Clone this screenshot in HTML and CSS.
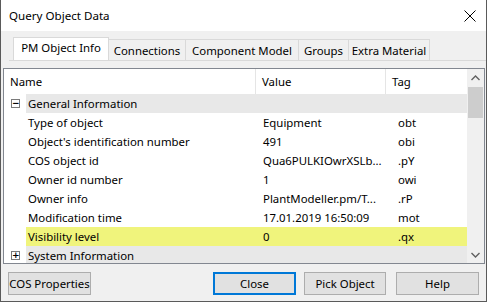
FILE: index.html
```html
<!DOCTYPE html>
<html lang="en">
<head>
<meta charset="UTF-8">
<title>Query Object Data</title>
<link rel="stylesheet" href="styles.css">
</head>
<body>

<div class="dialog">
    <div class="titlebar">
        <span class="title">Query Object Data</span>
        <svg class="close-x" width="12" height="12" viewBox="0 0 12 12">
            <path d="M0.5 0.5 L11.5 11.5 M11.5 0.5 L0.5 11.5" stroke="#000" stroke-width="1" fill="none"/>
        </svg>
    </div>

    <div class="content">
        <div class="tabs">
            <div class="tab active tab-pm">PM Object Info</div>
            <div class="tab tab-conn">Connections</div>
            <div class="tab tab-comp">Component Model</div>
            <div class="tab tab-groups">Groups</div>
            <div class="tab tab-extra">Extra Material</div>
        </div>
        <div class="tab-line"></div>

        <div class="listview">
            <div class="list-main">
                <div class="header">
                    <div class="hcell hname">Name</div>
                    <div class="hcell hvalue">Value</div>
                    <div class="hcell htag">Tag</div>
                </div>

                <div class="row">
                    <div class="indent"><span class="expander">&minus;</span></div>
                    <div class="row-body group">
                        <div class="cell">General Information</div>
                        <div class="cell"></div>
                        <div class="cell tag"></div>
                    </div>
                </div>
                <div class="row">
                    <div class="indent"></div>
                    <div class="row-body">
                        <div class="cell">Type of object</div>
                        <div class="cell">Equipment</div>
                        <div class="cell tag">obt</div>
                    </div>
                </div>
                <div class="row">
                    <div class="indent"></div>
                    <div class="row-body">
                        <div class="cell">Object's identification number</div>
                        <div class="cell">491</div>
                        <div class="cell tag">obi</div>
                    </div>
                </div>
                <div class="row">
                    <div class="indent"></div>
                    <div class="row-body">
                        <div class="cell">COS object id</div>
                        <div class="cell">Qua6PULKIOwrXSLb...</div>
                        <div class="cell tag">.pY</div>
                    </div>
                </div>
                <div class="row">
                    <div class="indent"></div>
                    <div class="row-body">
                        <div class="cell">Owner id number</div>
                        <div class="cell">1</div>
                        <div class="cell tag">owi</div>
                    </div>
                </div>
                <div class="row">
                    <div class="indent"></div>
                    <div class="row-body">
                        <div class="cell">Owner info</div>
                        <div class="cell">PlantModeller.pm/T...</div>
                        <div class="cell tag">.rP</div>
                    </div>
                </div>
                <div class="row">
                    <div class="indent"></div>
                    <div class="row-body">
                        <div class="cell">Modification time</div>
                        <div class="cell">17.01.2019 16:50:09</div>
                        <div class="cell tag">mot</div>
                    </div>
                </div>
                <div class="row">
                    <div class="indent"></div>
                    <div class="row-body selected">
                        <div class="cell">Visibility level</div>
                        <div class="cell">0</div>
                        <div class="cell tag">.qx</div>
                    </div>
                </div>
                <div class="row">
                    <div class="indent"><span class="expander">+</span></div>
                    <div class="row-body group">
                        <div class="cell">System Information</div>
                        <div class="cell"></div>
                        <div class="cell tag"></div>
                    </div>
                </div>
            </div>

            <div class="scrollbar">
                <div class="arrow">
                    <svg width="9" height="6" viewBox="0 0 9 6"><path d="M0.5 5 L4.5 1 L8.5 5" stroke="#606060" stroke-width="1.4" fill="none"/></svg>
                </div>
                <div class="track">
                    <div class="thumb"></div>
                </div>
                <div class="arrow">
                    <svg width="9" height="6" viewBox="0 0 9 6"><path d="M0.5 1 L4.5 5 L8.5 1" stroke="#606060" stroke-width="1.4" fill="none"/></svg>
                </div>
            </div>
        </div>

        <div class="buttons">
            <button class="btn btn-cos">COS Properties</button>
            <div class="spacer"></div>
            <button class="btn btn-close">Close</button>
            <button class="btn btn-pick">Pick Object</button>
            <button class="btn btn-help">Help</button>
        </div>
    </div>
</div>

</body>
</html>
```

FILE: styles.css
```css
body {
    margin: 0;
    background: #3b3b3b;
    font-family: "Noto Sans", "Liberation Sans", sans-serif;
    font-size: 11.4px;
    color: #000;
}

.dialog {
    width: 485px;
    height: 301px;
    border: 1px solid #5a5a5a;
    border-top: none;
    background: #f0f0f0;
    display: flex;
    flex-direction: column;
}

.titlebar {
    height: 31px;
    background: #fff;
    display: flex;
    align-items: center;
    justify-content: space-between;
    padding: 0 8px 0 8px;
    flex-shrink: 0;
}

.title {
    font-size: 11.6px;
}

.close-x {
    margin-right: 2px;
}

.content {
    flex: 1;
    display: flex;
    flex-direction: column;
}

.tabs {
    display: flex;
    align-items: flex-end;
    padding-left: 12px;
    margin-top: 6px;
    height: 23px;
}

.tab {
    height: 21px;
    line-height: 21px;
    box-sizing: border-box;
    text-align: center;
    white-space: nowrap;
    border: 1px solid #d9d9d9;
    border-bottom: none;
    border-left: none;
    background: #f0f0f0;
}

.tab.active {
    height: 23px;
    line-height: 20px;
    background: #fff;
    border-left: 1px solid #d9d9d9;
}

.tab-pm { width: 96px; }
.tab-conn { width: 77px; }
.tab-comp { width: 113px; }
.tab-groups { width: 50px; }
.tab-extra { width: 81px; }

.tab-line {
    height: 1px;
    background: #d9d9d9;
    margin-left: 8px;
}

.listview {
    margin: 7px 1px 0 2px;
    height: 194px;
    border: 1px solid #828790;
    background: #fff;
    display: flex;
}

.list-main {
    flex: 1;
    overflow: hidden;
}

.header {
    display: grid;
    grid-template-columns: 252px 130px 81px;
    height: 25px;
    align-items: center;
}

.hcell {
    height: 25px;
    line-height: 25px;
    border-right: 1px solid #e5e5e5;
    box-sizing: border-box;
}

.hname {
    padding-left: 6px;
}

.hvalue {
    padding-left: 6px;
}

.htag {
    padding-left: 6px;
    border-right: none;
}

.row {
    display: flex;
    height: 19px;
}

.indent {
    width: 22px;
    flex-shrink: 0;
    display: flex;
    align-items: center;
    padding-left: 7px;
    box-sizing: border-box;
}

.expander {
    width: 7px;
    height: 7px;
    border: 1px solid #7a7a7a;
    font-size: 9px;
    line-height: 7px;
    text-align: center;
    color: #000;
    font-family: "DejaVu Sans", sans-serif;
    font-weight: bold;
}

.row-body {
    flex: 1;
    display: grid;
    grid-template-columns: 230px 130px 81px;
    align-items: center;
}

.row-body.group {
    background: #e8e8e8;
}

.row-body.selected {
    background: #f0f47c;
}

.cell {
    white-space: nowrap;
    padding-left: 2px;
}

.cell + .cell {
    padding-left: 7px;
}

.cell.tag {
    padding-left: 12px;
}

.scrollbar {
    width: 17px;
    background: #f0f0f0;
    display: flex;
    flex-direction: column;
    flex-shrink: 0;
}

.arrow {
    height: 17px;
    display: flex;
    align-items: center;
    justify-content: center;
}

.track {
    flex: 1;
    padding: 1px 1px;
}

.thumb {
    height: 31px;
    background: #cdcdcd;
}

.buttons {
    display: flex;
    padding: 8px 7px 0 7px;
    gap: 8px;
}

.spacer {
    flex: 1;
}

.btn {
    height: 23px;
    font-family: "Noto Sans", "Liberation Sans", sans-serif;
    font-size: 11.4px;
    white-space: nowrap;
    background: #e1e1e1;
    border: 1px solid #adadad;
    padding: 0;
    color: #000;
}

.btn-cos {
    width: 83px;
}

.btn-close {
    width: 83px;
    border: 2px solid #0078d7;
}

.btn-pick {
    width: 82px;
}

.btn-help {
    width: 83px;
    margin-left: 2px;
}
```
